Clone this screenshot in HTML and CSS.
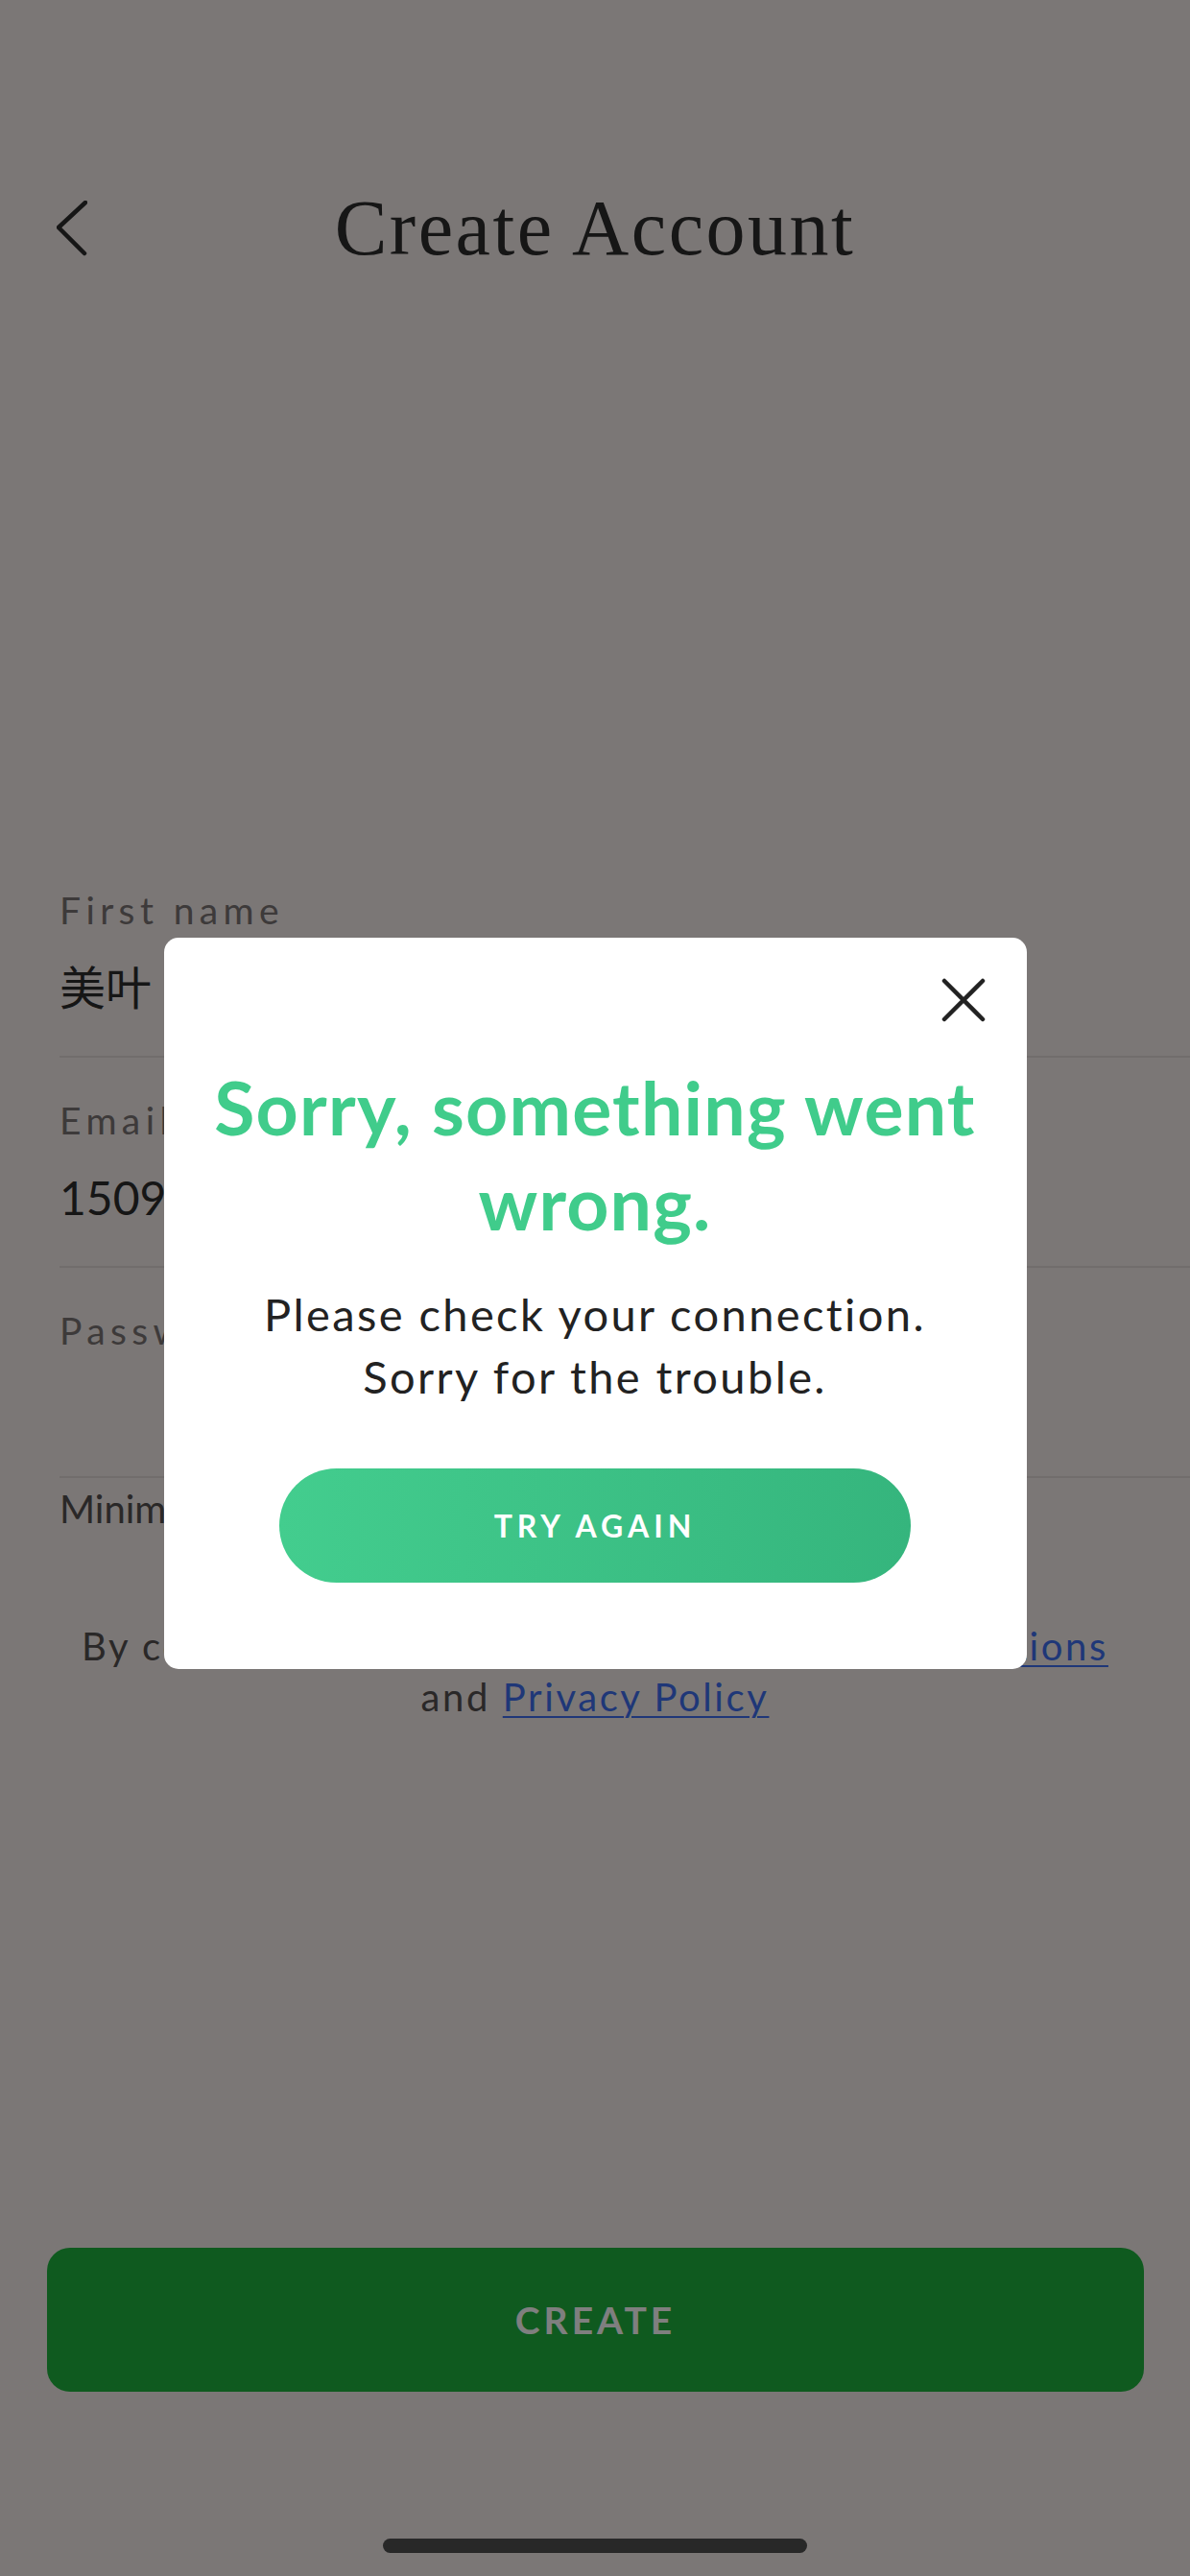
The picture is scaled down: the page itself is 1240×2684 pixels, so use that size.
FILE: index.html
```html
<!DOCTYPE html>
<html lang="en">
<head>
  <meta charset="UTF-8" />
  <meta name="viewport" content="width=device-width, initial-scale=1.0" />
  <title>Create Account</title>
  <link rel="stylesheet" href="styles.css">
</head>
<body>
  <div class="screen">
    <header class="topbar">
      <button class="back" aria-label="Back">
        <svg width="32" height="58" viewBox="0 0 32 58">
          <polyline points="30,2 2,28 29,55" fill="none" stroke="#2c2c2c" stroke-width="4.5" stroke-linecap="round" stroke-linejoin="round" />
        </svg>
      </button>
      <h1>Create Account</h1>
      <span></span>
    </header>

    <form class="signup">
      <div class="field">
        <label>First name</label>
        <div class="value">美叶</div>
      </div>
      <div class="field">
        <label>Email</label>
        <div class="value">15098672341@163.com</div>
      </div>
      <div class="field">
        <label>Password</label>
        <div class="value"></div>
      </div>
      <p class="hint">Minimum 8 characters, with a number</p>
    </form>

    <p class="terms">
      By continuing, you agree to our <a href="#">Terms and Conditions</a><br>
      and <a href="#">Privacy Policy</a>
    </p>

    <div class="spacer"></div>
    <button class="create">CREATE</button>
    <div class="home-bar"></div>
  </div>

  <div class="backdrop">
    <div class="dialog">
      <button class="close" aria-label="Close">
        <svg width="46" height="46" viewBox="0 0 46 46">
          <path d="M3 3 L43 43 M43 3 L3 43" stroke="#222" stroke-width="4.5" stroke-linecap="round" />
        </svg>
      </button>
      <h2>Sorry, something went wrong.</h2>
      <p>Please check your connection.<br>Sorry for the trouble.</p>
      <button class="try-again">TRY AGAIN</button>
    </div>
  </div>
</body>
</html>
```

FILE: styles.css
```css
body {
  margin: 0;
  font-family: Lato, "Noto Sans CJK SC", sans-serif;
  background-color: #f6eeec;
  color: #2c2c2c;
}

button {
  font-family: inherit;
  cursor: pointer;
}

.screen {
  height: 2684px;
  display: flex;
  flex-direction: column;
}

.topbar {
  display: grid;
  grid-template-columns: 1fr auto 1fr;
  align-items: center;
  padding: 197px 59px 0;
}

.back {
  justify-self: start;
  background: none;
  border: none;
  padding: 0;
  display: flex;
}

.topbar h1 {
  margin: 0;
  font: 400 82px/82px "Liberation Serif", serif;
  letter-spacing: 2.5px;
  color: #2c2c2c;
}

.signup {
  margin-top: 604px;
  padding-left: 62px;
}

.field {
  padding: 41px 0;
  border-bottom: 2px solid #e2dad8;
}

.field label {
  display: block;
  font-size: 39px;
  line-height: 48px;
  letter-spacing: 5.4px;
  color: #7a7474;
}

.field .value {
  margin-top: 27px;
  height: 60px;
  font-size: 48px;
  line-height: 60px;
  white-space: nowrap;
  color: #2c2c2c;
}

.hint {
  margin: 7px 0 0;
  font-size: 40px;
  line-height: 50px;
  white-space: nowrap;
  color: #555050;
}

.terms {
  margin: 92px 0 0;
  padding: 0 20px;
  text-align: center;
  font-size: 40px;
  line-height: 53px;
  letter-spacing: 2.6px;
  color: #555050;
}

.terms a {
  color: #3e6ef0;
  text-decoration-thickness: 2px;
  text-underline-offset: 5px;
}

.spacer {
  flex: 1;
}

.create {
  margin: 0 48px 0 49px;
  height: 150px;
  border: none;
  border-radius: 24px;
  background-color: #1eb43e;
  color: #ffffff;
  font-size: 39px;
  font-weight: 700;
  letter-spacing: 4px;
}

.home-bar {
  width: 442px;
  height: 15px;
  margin: 153px auto 24px;
  border-radius: 8px;
  background-color: #505050;
}

/* modal layer */
.backdrop {
  position: fixed;
  inset: 0;
  box-sizing: border-box;
  padding-top: 31px;
  background-color: rgba(0, 0, 0, 0.5);
  display: flex;
  justify-content: center;
  align-items: center;
}

.dialog {
  width: 899px;
  box-sizing: border-box;
  padding: 42px 43px 90px;
  background-color: #ffffff;
  border-radius: 15px;
  text-align: center;
}

.close {
  display: block;
  margin-left: auto;
  width: 46px;
  height: 46px;
  padding: 0;
  background: none;
  border: none;
}

.dialog h2 {
  margin: 39px 0 0;
  font-size: 77px;
  line-height: 99px;
  font-weight: 700;
  letter-spacing: 1.2px;
  color: #40cc8b;
}

.dialog p {
  margin: 35px 0 0;
  font-size: 47px;
  line-height: 65px;
  letter-spacing: 2.4px;
  color: #222222;
}

.try-again {
  display: block;
  margin: 63px auto 0;
  width: 658px;
  height: 119px;
  border: none;
  border-radius: 60px;
  background: linear-gradient(90deg, #43cd8e, #35b57d);
  color: #ffffff;
  font-size: 32px;
  font-weight: 700;
  letter-spacing: 5px;
}
```
